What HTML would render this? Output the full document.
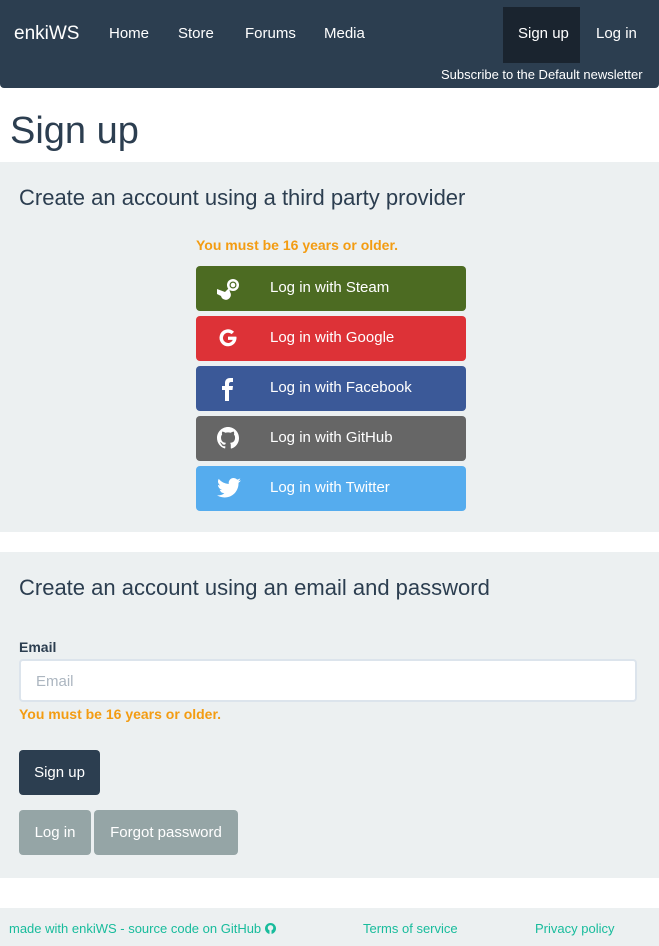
<!DOCTYPE html>
<html><head><meta charset="utf-8"><style>
*{box-sizing:border-box;margin:0;padding:0}
body{width:659px;height:946px;overflow:hidden;background:#fff;font-family:"Liberation Sans",sans-serif;color:#2c3e50;position:relative}
.a{position:absolute;white-space:nowrap}
nav{position:absolute;left:0;top:0;width:659px;height:88px;background:#2c3e50;border-radius:0 0 4px 4px;color:#fff;font-size:15px}
.sec{position:absolute;left:0;width:659px;background:#ecf0f1}
h2{font-weight:normal;font-size:22px}
.warn{color:#f39c12;font-weight:bold;font-size:14px}
.btn{position:absolute;left:196px;width:270px;height:45px;border-radius:4px;color:#fff;font-size:15px}
.btn span{position:absolute;left:74px;top:13px}
.btn svg{position:absolute;left:21px;top:11px}
.b2{position:absolute;height:45px;border-radius:4px;color:#fff;font-size:15px;text-align:center;line-height:45px}
.ft{color:#18bc9c;font-size:13px}
</style></head><body>
<nav>
<div class="a" style="left:14px;top:23px;font-size:19px">enkiWS</div>
<div class="a" style="left:109px;top:25px">Home</div>
<div class="a" style="left:178px;top:25px">Store</div>
<div class="a" style="left:245px;top:25px">Forums</div>
<div class="a" style="left:324px;top:25px">Media</div>
<div class="a" style="left:503px;top:7px;width:77px;height:56px;background:#1a242f"></div>
<div class="a" style="left:518px;top:25px">Sign up</div>
<div class="a" style="left:596px;top:25px">Log in</div>
<div class="a" style="left:441px;top:67px;font-size:13px">Subscribe to the Default newsletter</div>
</nav>
<div class="a" style="left:10px;top:110px;font-size:38px">Sign up</div>
<div class="sec" style="top:162px;height:370px"></div>
<h2 class="a" style="left:19px;top:185px">Create an account using a third party provider</h2>
<div class="a warn" style="left:196px;top:237px">You must be 16 years or older.</div>
<div class="btn" style="top:266px;background:#4c6b22"><svg width="24" height="24" viewBox="0 0 24 24"><circle cx="16" cy="8" r="6" fill="#fff"/><circle cx="16" cy="8" r="3.5" fill="#4c6b22"/><circle cx="16" cy="8" r="2.3" fill="#fff"/><path d="M0 12 L8 15 L12 11 L13 15 A5 5 0 1 1 4 19 L0 17Z" fill="#fff"/></svg><span>Log in with Steam</span></div>
<div class="btn" style="top:316px;background:#dd3237"><svg width="22" height="22" viewBox="0 0 24 24"><path d="M21 10.5H12v3.6h5.2A5.6 5.6 0 1 1 16 7.8l2.6-2.6A9.3 9.3 0 1 0 21.3 12c0-.5 0-1-.3-1.5z" fill="#fff"/></svg><span>Log in with Google</span></div>
<div class="btn" style="top:366px;background:#3b5998"><svg width="22" height="24" viewBox="0 0 22 24"><path d="M8 24V13H5V9h3V6c0-3 2-5 5-5h3v4h-2c-1 0-2 .5-2 2v2h4l-.5 4H12v11z" fill="#fff"/></svg><span>Log in with Facebook</span></div>
<div class="btn" style="top:416px;background:#666"><svg width="22" height="22" viewBox="0 0 16 16"><path fill="#fff" d="M8 0C3.58 0 0 3.58 0 8c0 3.54 2.29 6.53 5.47 7.59.4.07.55-.17.55-.38v-1.33c-2.23.48-2.7-1.07-2.7-1.07-.36-.92-.89-1.17-.89-1.17-.73-.5.06-.49.06-.49.8.06 1.23.83 1.23.83.72 1.23 1.88.87 2.34.67.07-.52.28-.87.51-1.07-1.78-.2-3.64-.89-3.64-3.95 0-.87.31-1.59.82-2.15-.08-.2-.36-1.02.08-2.12 0 0 .67-.21 2.2.82a7.6 7.6 0 0 1 4 0c1.53-1.04 2.2-.82 2.2-.82.44 1.1.16 1.92.08 2.12.51.56.82 1.27.82 2.15 0 3.07-1.87 3.75-3.65 3.95.29.25.54.73.54 1.48v2.2c0 .21.15.46.55.38A8 8 0 0 0 16 8c0-4.42-3.58-8-8-8z"/></svg><span>Log in with GitHub</span></div>
<div class="btn" style="top:466px;background:#55acee"><svg width="24" height="22" viewBox="0 0 24 20"><path fill="#fff" d="M24 2.4a10 10 0 0 1-2.8.8A5 5 0 0 0 23.3.4a10 10 0 0 1-3.1 1.2A4.9 4.9 0 0 0 11.8 6 14 14 0 0 1 1.7.9a4.9 4.9 0 0 0 1.5 6.6A4.9 4.9 0 0 1 1 6.9a4.9 4.9 0 0 0 3.9 4.8 5 5 0 0 1-2.2.1 4.9 4.9 0 0 0 4.6 3.4A9.900 9.9 0 0 1 0 17.3 14 14 0 0 0 7.5 19.5c9.1 0 14-7.5 14-14v-.6A10 10 0 0 0 24 2.4z"/></svg><span>Log in with Twitter</span></div>
<div class="sec" style="top:552px;height:326px"></div>
<h2 class="a" style="left:19px;top:575px">Create an account using an email and password</h2>
<div class="a" style="left:19px;top:639px;font-size:14px;font-weight:bold">Email</div>
<div class="a" style="left:19px;top:659px;width:618px;height:43px;background:#fff;border:2px solid #dce4ec;border-radius:4px;color:#acb6c0;font-size:15px;padding:12px 15px">Email</div>
<div class="a warn" style="left:19px;top:706px">You must be 16 years or older.</div>
<div class="b2 a" style="left:19px;top:750px;width:81px;background:#2c3e50">Sign up</div>
<div class="b2 a" style="left:19px;top:810px;width:72px;background:#95a5a6">Log in</div>
<div class="b2 a" style="left:94px;top:810px;width:144px;background:#95a5a6">Forgot password</div>
<div class="sec" style="top:908px;height:38px"></div>
<div class="a ft" style="left:9px;top:921px">made with enkiWS - source code on GitHub <svg width="11" height="11" viewBox="0 0 16 16" style="vertical-align:-1px"><circle cx="8" cy="8" r="8" fill="#18bc9c"/><circle cx="8" cy="7" r="4" fill="#ecf0f1"/><rect x="6.5" y="10" width="3" height="6" fill="#ecf0f1"/></svg></div>
<div class="a ft" style="left:363px;top:921px">Terms of service</div>
<div class="a ft" style="left:535px;top:921px">Privacy policy</div>
</body></html>
